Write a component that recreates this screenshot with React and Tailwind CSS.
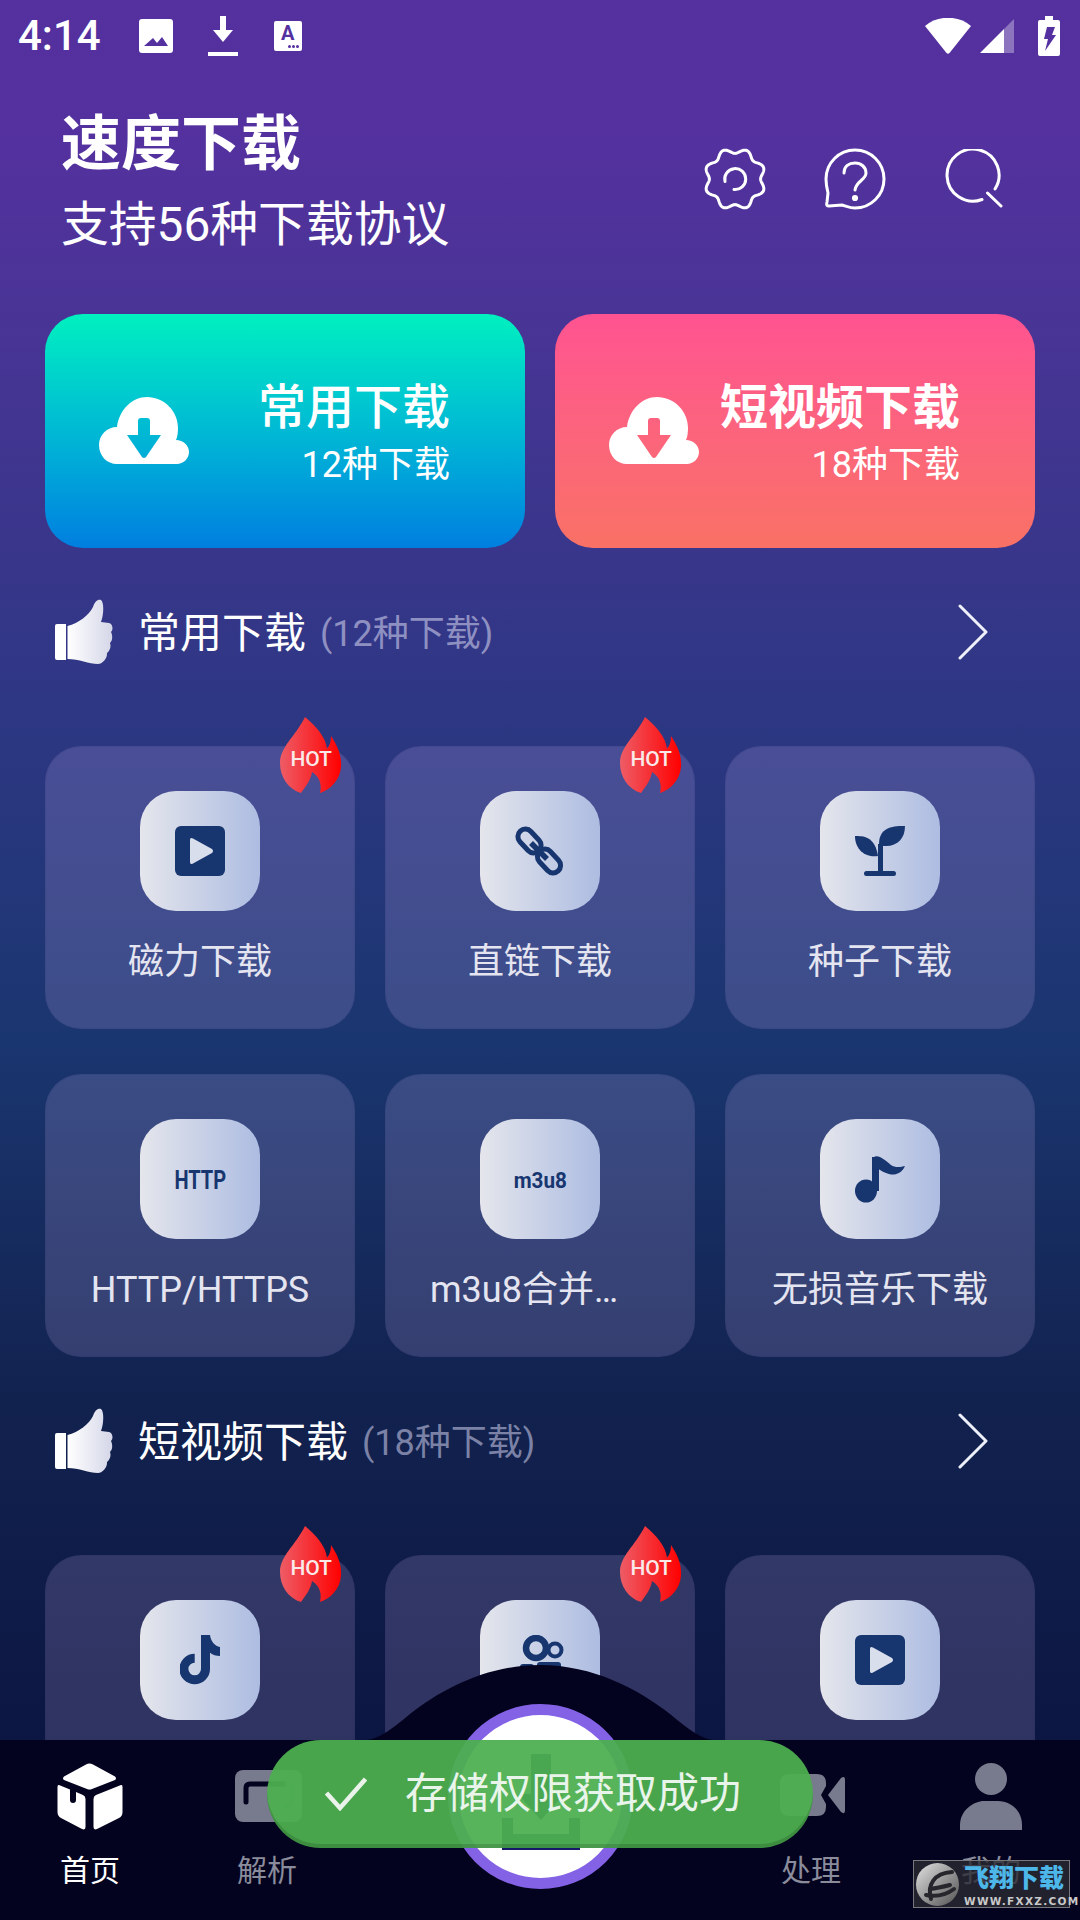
import React from "react";

const Gear = () => {
  let d = "";
  for (let i = 0; i <= 240; i++) {
    const t = (i / 240) * Math.PI * 2;
    const r = 28.2 - 2.6 * Math.cos(8 * t);
    const x = 32 + r * Math.sin(t);
    const y = 32 - r * Math.cos(t);
    d += (i === 0 ? "M" : "L") + x.toFixed(2) + " " + y.toFixed(2) + " ";
  }
  return (
    <svg width="64" height="64" viewBox="0 0 64 64" fill="none" stroke="white" strokeWidth="3" strokeLinecap="round" strokeLinejoin="round">
      <path d={d + "Z"} />
      <path d="M22 34.5 A10.5 10.5 0 1 1 31 42.5" />
    </svg>
  );
};

const Help = () => (
  <svg width="62" height="62" viewBox="0 0 62 62" fill="none" stroke="white" strokeWidth="3" strokeLinecap="round" strokeLinejoin="round">
    <path d="M31 2 C47 2 60 15 60 31 C60 47 47 60 31 60 C26 60 22 58 18 57 L5 58 C3 58 2 57 3 54 L4 45 C3 41 2 36 2 31 C2 15 15 2 31 2 Z" />
    <path d="M20 25 C20 18 25 15 31 15 C37 15 42 19 42 25 C42 32 32 33 31 42" />
    <circle cx="31" cy="50" r="1.6" fill="white" />
  </svg>
);

const SearchIcon = () => (
  <svg width="58" height="60" viewBox="0 0 58 60" fill="none" stroke="white" strokeWidth="3" strokeLinecap="round" strokeLinejoin="round">
    <path d="M37 50.5 A26 26 0 1 1 50 40" />
    <path d="M42.5 44 L56 57" />
  </svg>
);

const Thumb = () => (
  <svg width="60" height="66" viewBox="0 0 60 66" className="shrink-0">
    <defs>
      <linearGradient id="thumbg" x1="0" y1="0" x2="1" y2="0">
        <stop offset="0" stopColor="#ffffff" />
        <stop offset="1" stopColor="#d4d6e8" />
      </linearGradient>
    </defs>
    <path d="M3 25 H12 V61 H3 Q1 61 1 59 V27 Q1 25 3 25 Z" fill="white" />
    <path d="M13.5 27 C25 24 35 16 39 8 C41 2 44 0 47 1 C50 3 50 15 47 23 L55 24 C59 25 59.5 31 57 33 C59 37 58.5 42 56 44 C57.5 48 55.5 52 53 54 C53.5 60 48 65 44 65 C35 65 25 60 13.5 60 Z" fill="url(#thumbg)" />
  </svg>
);

const Cloud = ({ className }) => (
  <svg width="90" height="67" viewBox="0 0 90 67" className={className}>
    <path
      fillRule="evenodd"
      fill="white"
      d="M18 67 C8 67 0 59 0 48 C0 38 8 30 18 30 C20 13 33 0 48 0 C65 0 79 14 79 31 C79 35 78.5 40 77 43 C84 43 90 48 90 55 C90 62 84 67 78 67 Z M39 24 Q39 21 42 21 H48 Q51 21 51 24 V38 H62 L47 60 Q45 62 43 60 L28 38 H39 Z"
    />
  </svg>
);

const Hot = () => (
  <div className="absolute right-[13px] top-[-29px] h-[76px] w-[62px]">
    <svg width="62" height="76" viewBox="0 0 62 76" className="absolute inset-0">
      <defs>
        <linearGradient id="hotg" x1="0" y1="0" x2="1" y2="0">
          <stop offset="0" stopColor="#ee5c66" />
          <stop offset="1" stopColor="#ff0000" />
        </linearGradient>
      </defs>
      <path d="M25 0 C35 8 46 20 47 32 C50 28 51 24 51 19 C57 28 62 38 61 50 C60 63 50 73 40 76 C42 68 40 60 32 55 C31 62 27 68 21 76 C8 72 0 60 0 46 C0 30 15 20 25 0 Z" fill="url(#hotg)" />
    </svg>
    <span className="absolute left-0 top-[29px] w-full text-center text-[21px] font-medium leading-[26px] tracking-[-0.3px] text-[#fbe9ea]">HOT</span>
  </div>
);

const DARK = "#17366f";

const PlayIcon = () => (
  <svg width="50" height="50" viewBox="0 0 50 50">
    <rect width="50" height="50" rx="6" fill={DARK} />
    <path d="M15 14 Q15 11 18 12.5 L37 23 Q39 25 37 27 L18 37.5 Q15 39 15 36 Z" fill="#d9deec" />
  </svg>
);

const LinkIcon = () => (
  <svg width="50" height="50" viewBox="0 0 50 50" fill="none" stroke={DARK} strokeWidth="5">
    <rect x="-13.5" y="-7.5" width="27" height="15" rx="7.5" transform="translate(14.5 15) rotate(47)" />
    <rect x="-13.5" y="-7.5" width="27" height="15" rx="7.5" transform="translate(34 35) rotate(47)" />
    <path d="M16 17 L32 33" strokeWidth="5.5" />
  </svg>
);

const Sprout = () => (
  <svg width="50" height="50" viewBox="0 0 50 50" fill={DARK}>
    <path d="M0 10 C8 10 20 10 23 30 C12 32 0 25 0 10 Z" />
    <path d="M50 0 C40 0 24 0 24 18 C26 20 27 20 31 20 C43 20 50 12 50 0 Z" />
    <rect x="23" y="18" width="5" height="28" />
    <rect x="9" y="45" width="32" height="5" rx="2.5" />
  </svg>
);

const NoteIcon = () => (
  <svg width="50" height="48" viewBox="0 0 50 48" fill={DARK}>
    <ellipse cx="11" cy="36" rx="11" ry="11.5" />
    <rect x="17" y="2" width="7" height="34" />
    <path d="M18 3 C22 -2 30 5 36 10 C40 13 46 12 50 11 C47 18 40 21 34 19 C30 18 26 16 22 13 Z" />
  </svg>
);

const TikTok = () => (
  <svg width="40" height="50" viewBox="0 0 40 50" fill="none">
    <path d="M25.5 0 V34 A10.8 10.8 0 1 1 14.7 23.2" stroke={DARK} strokeWidth="9" />
    <path d="M29 0 H30 C31 7 35 11 40 12 V21 C36 21 33 20 29 17 Z" fill={DARK} />
  </svg>
);

const Camera = () => (
  <svg width="50" height="50" viewBox="0 0 50 50" fill="none">
    <circle cx="21" cy="13" r="10" stroke={DARK} strokeWidth="6.5" />
    <circle cx="40" cy="15" r="6.5" stroke={DARK} strokeWidth="4" />
    <rect x="22" y="27" width="24" height="14" rx="3" fill={DARK} />
    <rect x="5" y="29" width="14" height="12" rx="3" fill={DARK} />
  </svg>
);

const HttpIcon = () => (
  <span className="mt-[4px] inline-block scale-x-[0.8] text-[25px] font-bold leading-[30px]" style={{ color: DARK }}>HTTP</span>
);
const M3u8Icon = () => (
  <span className="mt-[4px] inline-block scale-x-[0.94] text-[22px] font-bold leading-[30px]" style={{ color: DARK }}>m3u8</span>
);

const Card = ({ label, icon, hot, left }) => (
  <div className="relative flex h-[283px] flex-col items-center rounded-[36px] bg-[rgba(228,195,255,0.17)] pt-[45px] shadow-[inset_0_0_0_1px_rgba(30,40,100,0.12)]">
    {hot && <Hot />}
    <div className="flex h-[120px] w-[120px] items-center justify-center rounded-[36px] bg-linear-to-r from-[#e5e6ec] to-[#adbce1]">
      {icon}
    </div>
    {label && (
      <div className={"mt-[26px] text-[36px] leading-[50px] text-[#e4e5f0] whitespace-nowrap " + (left ? "self-start pl-[45px]" : "")}>{label}</div>
    )}
  </div>
);

const SectionHead = ({ title, sub, subClass }) => (
  <div className="flex h-[168px] items-center pl-[54px] pr-[92px]">
    <Thumb />
    <span className="ml-[24px] mt-[4px] text-[42px] leading-[56px] text-white">{title}</span>
    <span className={"ml-[14px] mt-[4px] text-[36px] leading-[56px] " + subClass}>{sub}</span>
    <svg width="30" height="56" viewBox="0 0 30 56" fill="none" stroke="#eef0fa" strokeWidth="3" strokeLinecap="round" strokeLinejoin="round" className="ml-auto">
      <path d="M2 2 L28 28 L2 54" />
    </svg>
  </div>
);

const StatusBar = () => (
  <div className="flex h-[72px] items-center pl-[18px] pr-[20px]">
    <span className="text-[42px] font-medium leading-[72px] text-white">4:14</span>
    <svg width="34" height="34" viewBox="0 0 34 34" className="ml-[38px]">
      <path fillRule="evenodd" fill="white" d="M3 0 H31 Q34 0 34 3 V31 Q34 34 31 34 H3 Q0 34 0 31 V3 Q0 0 3 0 Z M5 27 H29 L23 18 L18 24 L14 19 Z" />
    </svg>
    <svg width="30" height="40" viewBox="0 0 30 40" className="ml-[35px]" fill="white">
      <rect x="12" y="0" width="6" height="14" />
      <path d="M5 14 H25 L15 26 Z" />
      <rect x="0" y="36" width="30" height="4" />
    </svg>
    <div className="relative ml-[36px] flex h-[30px] w-[28px] flex-col items-center rounded-[2px] bg-white">
      <span className="text-[20px] font-bold leading-[24px] text-[#5530a0]">A</span>
      <span className="absolute bottom-[3px] right-[3px] flex gap-[1px]">
        <i className="h-[3px] w-[3px] rounded-full bg-[#5530a0]" />
        <i className="h-[3px] w-[3px] rounded-full bg-[#5530a0]" />
        <i className="h-[3px] w-[3px] rounded-full bg-[#5530a0]" />
      </span>
    </div>
    <svg width="46" height="36" viewBox="0 0 46 36" className="ml-auto" fill="white">
      <path d="M0 8 C12 -3 34 -3 46 8 L24.5 35 Q23 36.5 21.5 35 Z" />
    </svg>
    <svg width="34" height="34" viewBox="0 0 34 34" className="ml-[9px]" fill="white">
      <path d="M0 34 L24 10 V34 Z" />
      <path d="M24 10 L34 0 V34 H24 Z" opacity="0.33" />
    </svg>
    <svg width="22" height="40" viewBox="0 0 22 40" className="ml-[24px]">
      <path fill="white" d="M7 0 H15 V4 H20 Q22 4 22 6 V38 Q22 40 20 40 H2 Q0 40 0 38 V6 Q0 4 2 4 H7 Z" />
      <path fill="#5530a0" d="M9 11 H17 L14 19 H18 L7 35 L10 23 H6 Z" />
    </svg>
  </div>
);

const BigButton = ({ gradient, title, sub, weight }) => (
  <div className={"flex h-[234px] flex-1 items-center justify-between rounded-[38px] pl-[54px] pr-[75px] " + gradient}>
    <Cloud className="mt-[-2px]" />
    <div className="flex flex-col items-end pt-[3px]">
      <span className={"text-[48px] leading-[62px] text-white " + weight}>{title}</span>
      <span className="mt-[3px] text-[36px] leading-[46px] text-white">{sub}</span>
    </div>
  </div>
);

const HomeIcon = () => (
  <svg width="66" height="67" viewBox="0 0 66 67" fill="white">
    <path d="M29 1.5 Q32.5 -0.5 36 1.5 L58 13.5 Q60 15.5 58 17 L35 26 Q32.5 27 30 26 L7 17 Q5 15.5 7 13.5 Z" />
    <path fillRule="evenodd" d="M2 22 L13 26.5 V37 Q13 40 16 40 Q19 40 19 37 V29 L26 32 Q28.5 33 28.5 36 V64 Q28.5 67.5 25 66 L4 55 Q0.5 53 0.5 49 V24 Q0.5 21.5 2 22 Z" />
    <path d="M64 22 Q65.5 21.5 65.5 24 V49 Q65.5 53 62 55 L40 66 Q36.5 67.5 36.5 64 V36 Q36.5 33 39 32 Z" />
  </svg>
);

const ParseIcon = () => (
  <svg width="67" height="52" viewBox="0 0 67 52" fill="none">
    <rect width="67" height="52" rx="8" fill="#787a8d" />
    <path d="M11 32 V18 Q11 14 15 14 H50" stroke="#04031f" strokeWidth="5" strokeLinecap="round" />
    <path d="M50 14 H53 Q57 14 57 18 V32 Q57 36 53 36 H48" stroke="#5e6072" strokeWidth="4" />
  </svg>
);

const VideoIcon = () => (
  <svg width="65" height="42" viewBox="0 0 65 42" fill="#787a8d">
    <path d="M9 0 H37 Q46 0 46 9 V12 L41 21 L46 30 V33 Q46 42 37 42 H9 Q0 42 0 33 V9 Q0 0 9 0 Z" />
    <path d="M48 21 L61 4 Q65 1 65 6 V36 Q65 41 61 38 Z" />
  </svg>
);

const PersonIcon = () => (
  <svg width="62" height="67" viewBox="0 0 62 67" fill="#787a8d">
    <circle cx="31" cy="16" r="16" />
    <path d="M0 67 V62 C0 47 14 38 24 38 H38 C50 38 62 47 62 62 V67 Z" />
  </svg>
);

const NavItem = ({ icon, label, active, className }) => (
  <div className={"absolute top-0 flex h-[180px] flex-col items-center " + className}>
    <div className="flex h-[90px] w-[70px] items-end justify-center">{icon}</div>
    <div className={"mt-[21px] text-[30px] leading-[40px] whitespace-nowrap " + (active ? "text-white" : "text-[#8a8c9c]")}>{label}</div>
  </div>
);

export default function App() {
  return (
    <div
      className="relative flex h-[1920px] w-[1080px] flex-col overflow-hidden bg-[linear-gradient(180deg,#55309f_0px,#53319e_150px,#4a3496_300px,#2e3784_700px,#1a3670_1040px,#12224f_1400px,#0c1642_1740px,#0b1541_1920px)]"
      style={{ fontFamily: 'Roboto, "Noto Sans CJK SC", sans-serif' }}
    >
      <div className="h-[1740px] shrink-0 overflow-hidden">
        <StatusBar />
        <div className="flex h-[242px] items-start justify-between pl-[61px] pr-[77px]">
          <div className="flex flex-col pt-[33px]">
            <span className="text-[60px] font-bold leading-[80px] text-white">速度下载</span>
            <span className="text-[47.8px] leading-[80px] text-white">支持56种下载协议</span>
          </div>
          <div className="flex items-center pt-[75px]">
            <Gear />
            <div className="ml-[57px]"><Help /></div>
            <div className="ml-[59px]"><SearchIcon /></div>
          </div>
        </div>
        <div className="flex gap-[30px] px-[45px]">
          <BigButton gradient="bg-linear-to-b from-[#00f0bf] to-[#007ee0]" title="常用下载" sub="12种下载" weight="font-medium" />
          <BigButton gradient="bg-linear-to-b from-[#ff5391] to-[#f97165]" title="短视频下载" sub="18种下载" weight="font-bold" />
        </div>
        <SectionHead title="常用下载" sub="(12种下载)" subClass="text-[#8f90c2]" />
        <div className="mt-[30px] grid grid-cols-3 gap-x-[30px] gap-y-[45px] px-[45px]">
          <Card hot label="磁力下载" icon={<PlayIcon />} />
          <Card hot label="直链下载" icon={<LinkIcon />} />
          <Card label="种子下载" icon={<Sprout />} />
          <Card label="HTTP/HTTPS" icon={<HttpIcon />} />
          <Card label="m3u8合并…" left icon={<M3u8Icon />} />
          <Card label="无损音乐下载" icon={<NoteIcon />} />
        </div>
        <SectionHead title="短视频下载" sub="(18种下载)" subClass="text-[#7b82a6]" />
        <div className="mt-[30px] grid grid-cols-3 gap-x-[30px] gap-y-[45px] px-[45px]">
          <Card hot icon={<TikTok />} />
          <Card hot icon={<Camera />} />
          <Card icon={<PlayIcon />} />
        </div>
      </div>

      <div className="relative h-[180px] shrink-0 bg-[#04031f]">
        <svg width="348" height="76" viewBox="0 0 348 76" className="absolute left-[366px] top-[-75px]" fill="#04031f">
          <path d="M0 76 V75 C10 75 24 66 44 49 C76 24 121 0 174 0 C227 0 272 24 304 49 C324 66 338 75 348 75 V76 Z" />
        </svg>
        <NavItem icon={<HomeIcon />} label="首页" active className="left-[55px] w-[70px]" />
        <NavItem icon={<div className="mb-[8px] ml-[3px]"><ParseIcon /></div>} label="解析" className="left-[232px] w-[70px]" />
        <NavItem icon={<div className="mb-[14px] ml-[3px]"><VideoIcon /></div>} label="处理" className="left-[776px] w-[70px]" />
        <NavItem icon={<PersonIcon />} label="我的" className="left-[956px] w-[70px]" />

        <div className="absolute left-[448px] top-[-36px] flex h-[185px] w-[185px] items-center justify-center rounded-full border-[11px] border-[#8462e6] bg-white">
          <svg width="78" height="98" viewBox="0 0 78 98" className="mt-[12px]" fill="#17176a">
            <rect x="29" y="0" width="20" height="44" />
            <path d="M16 40 H62 L39 66 Z" />
            <rect x="0" y="80" width="78" height="16" />
            <rect x="0" y="64" width="11" height="18" />
            <rect x="67" y="64" width="11" height="18" />
          </svg>
        </div>
      </div>

      <div className="absolute left-[267px] top-[1740px] flex h-[108px] w-[546px] items-center rounded-[54px] bg-[#4caf50]/94 pl-[58px] shadow-[inset_0_-4px_0_rgba(0,0,0,0.14)]">
        <svg width="42" height="34" viewBox="0 0 42 34" fill="none" stroke="#eaf3ea" strokeWidth="4.5">
          <path d="M1.5 16 L15 31 L40.5 2" />
        </svg>
        <span className="ml-[38px] text-[42px] leading-[56px] whitespace-nowrap text-[#e9f4ea]">存储权限获取成功</span>
      </div>

      <div className="absolute left-[913px] top-[1860px] h-[48px] w-[157px] border border-[#77777c] bg-[#2a2a33]/80">
        <div className="absolute left-[2px] top-[2px] h-[43px] w-[43px] rounded-full bg-linear-to-br from-[#e4e4e4] to-[#555]">
          <svg width="43" height="43" viewBox="0 0 43 43" fill="none" stroke="#26262c" strokeWidth="4" strokeLinecap="round">
            <path d="M15 36 C11 22 18 10 36 9" />
            <path d="M14 26 C22 25 26 24 34 22" />
            <path d="M10 32 C20 34 30 32 38 26" />
          </svg>
        </div>
        <span className="absolute left-[50px] top-[3px] text-[25px] font-black leading-[30px] whitespace-nowrap text-[#4db7ea]">飞翔下载</span>
        <span className="absolute left-[50px] top-[34px] text-[10.5px] font-bold leading-[12px] tracking-[1.3px] whitespace-nowrap text-[#c9c9c9]" style={{ fontFamily: '"DejaVu Sans", sans-serif' }}>WWW.FXXZ.COM</span>
      </div>
    </div>
  );
}
